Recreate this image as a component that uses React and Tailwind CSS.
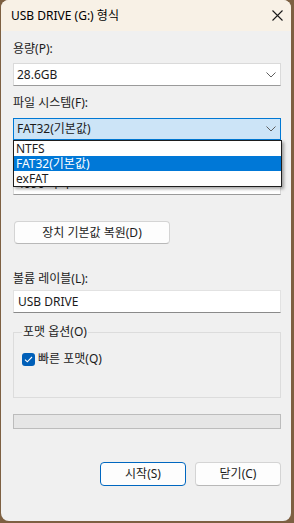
import React from "react";

function Chevron() {
  return (
    <svg width="10" height="6" viewBox="0 0 10 6" className="shrink-0">
      <path d="M0.5 0.5 L5 5 L9.5 0.5" fill="none" stroke="#5f5f5f" strokeWidth="1" />
    </svg>
  );
}

export default function App() {
  return (
    <div className="w-[294px] h-[523px] bg-[#7d6042] pl-[1px] font-['Noto_Sans','Noto_Sans_CJK_KR',sans-serif] text-[12px] leading-4 text-[#1b1b1b]">
      <div className="w-[290px] h-[521px] rounded-lg bg-[#f0f0f0] overflow-hidden flex flex-col">
        {/* title bar */}
        <div className="h-[31px] shrink-0 bg-[#f8f1e6] flex items-center justify-between pl-[10px] pr-[8px]">
          <span className="text-[12px] text-black">USB DRIVE (G:) 형식</span>
          <svg width="11" height="11" viewBox="0 0 11 11">
            <path d="M0.5 0.5 L10.5 10.5 M10.5 0.5 L0.5 10.5" stroke="#1a1a1a" strokeWidth="1.1" fill="none" />
          </svg>
        </div>

        {/* content */}
        <div className="pl-[12px] pr-[10px] flex flex-col">
          <div className="mt-[10px]">용량(P):</div>
          <div className="mt-[6px] h-[23px] bg-white border border-[#dadada] border-b-[#9a9a9a] flex items-center justify-between pl-[3px] pr-[4px]">
            <span>28.6GB</span>
            <Chevron />
          </div>

          <div className="mt-[9px]">파일 시스템(F):</div>
          <div className="relative mt-[7px]">
            <div className="h-[22px] bg-[#cce4f7] border border-[#0078d4] flex items-center justify-between pl-[3px] pr-[4px]">
              <span>FAT32(기본값)</span>
              <Chevron />
            </div>
            {/* open dropdown list */}
            <div className="absolute left-0 top-full w-[269px] z-10 bg-white border border-[#1e1e1e] shadow-[2px_2px_3px_rgba(0,0,0,0.35)] flex flex-col">
              <div className="h-[15px] flex items-center pl-[2px] leading-[15px]">NTFS</div>
              <div className="h-[15px] flex items-center pl-[2px] leading-[15px] bg-[#0078d7] text-white">FAT32(기본값)</div>
              <div className="h-[15px] flex items-center pl-[2px] leading-[15px]">exFAT</div>
            </div>
          </div>

          {/* allocation unit label, hidden under the open list */}
          <div className="mt-[10px] h-4"></div>
          <div className="mt-[6px] h-[23px] bg-white border border-[#dadada] border-b-[#9a9a9a] flex items-center justify-between pl-[3px] pr-[4px]">
            <span>4096 바이트</span>
            <Chevron />
          </div>

          <div className="mt-[26px] ml-[1px] w-[156px] h-[23px] bg-[#fdfdfd] border border-[#d4d4d4] border-b-[#b8b8b8] rounded-[4px] flex items-center justify-center">
            장치 기본값 복원(D)
          </div>

          <div className="mt-[27px]">볼륨 레이블(L):</div>
          <div className="mt-[3px] h-[23px] bg-white border border-[#e2e2e2] border-b-[#8a8a8a] flex items-center pl-[4px]">
            USB DRIVE
          </div>

          <div className="relative mt-[19px] h-[66px] border border-[#dcdcdc]">
            <span className="absolute -top-[9px] left-[8px] bg-[#f0f0f0] px-[1px]">포맷 옵션(O)</span>
            <div className="pt-[18px] pl-[8px] flex items-center gap-[3px]">
              <div className="w-[13px] h-[13px] rounded-[3px] bg-[#005fb8] flex items-center justify-center">
                <svg width="9" height="7" viewBox="0 0 9 7">
                  <path d="M1 3.6 L3.3 5.8 L8 1" fill="none" stroke="#ffffff" strokeWidth="1.1" />
                </svg>
              </div>
              <span>빠른 포맷(Q)</span>
            </div>
          </div>

          <div className="mt-[16px] h-[15px] bg-[#e6e6e6] border border-[#bcbcbc]"></div>

          <div className="mt-[33px] flex justify-end gap-[9px]">
            <div className="w-[86px] h-[24px] bg-[#fdfdfd] border border-[#0067c0] rounded-[4px] flex items-center justify-center">
              시작(S)
            </div>
            <div className="w-[86px] h-[24px] bg-[#fdfdfd] border border-[#d4d4d4] border-b-[#b8b8b8] rounded-[4px] flex items-center justify-center">
              닫기(C)
            </div>
          </div>
        </div>
      </div>
    </div>
  );
}
